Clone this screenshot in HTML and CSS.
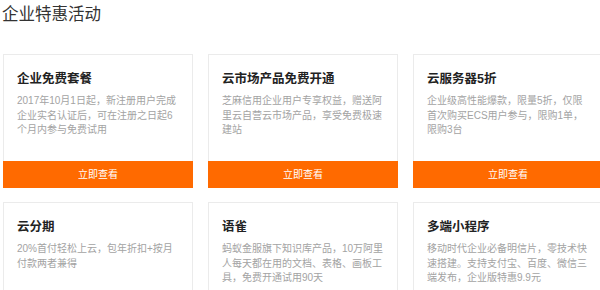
FILE: index.html
```html
<!DOCTYPE html>
<html lang="zh-CN">

<head>
  <meta charset="UTF-8">
  <meta name="viewport" content="width=device-width, initial-scale=1.0">
  <title>企业特惠活动</title>
  <link rel="stylesheet" href="styles.css">
</head>

<body>
  <div class="promo">
    <h2 class="promo-title">企业特惠活动</h2>
    <ul class="promo-list">
      <li class="promo-card">
        <div class="promo-body">
          <h3 class="promo-name">企业免费套餐</h3>
          <p class="promo-desc">2017年10月1日起，新注册用户完成企业实名认证后，可在注册之日起6个月内参与免费试用</p>
        </div>
        <a class="promo-btn">立即查看</a>
      </li>
      <li class="promo-card">
        <div class="promo-body">
          <h3 class="promo-name">云市场产品免费开通</h3>
          <p class="promo-desc">芝麻信用企业用户专享权益，赠送阿里云自营云市场产品，享受免费极速建站</p>
        </div>
        <a class="promo-btn">立即查看</a>
      </li>
      <li class="promo-card">
        <div class="promo-body">
          <h3 class="promo-name">云服务器5折</h3>
          <p class="promo-desc">企业级高性能爆款，限量5折，仅限首次购买ECS用户参与，限购1单，限购3台</p>
        </div>
        <a class="promo-btn">立即查看</a>
      </li>
      <li class="promo-card">
        <div class="promo-body">
          <h3 class="promo-name">云分期</h3>
          <p class="promo-desc">20%首付轻松上云，包年折扣+按月付款两者兼得</p>
        </div>
        <a class="promo-btn">立即查看</a>
      </li>
      <li class="promo-card">
        <div class="promo-body">
          <h3 class="promo-name">语雀</h3>
          <p class="promo-desc">蚂蚁金服旗下知识库产品，10万阿里人每天都在用的文档、表格、画板工具，免费开通试用90天</p>
        </div>
        <a class="promo-btn">立即查看</a>
      </li>
      <li class="promo-card">
        <div class="promo-body">
          <h3 class="promo-name">多端小程序</h3>
          <p class="promo-desc">移动时代企业必备明信片，零技术快速搭建。支持支付宝、百度、微信三端发布，企业版特惠9.9元</p>
        </div>
        <a class="promo-btn">立即查看</a>
      </li>
    </ul>
  </div>
</body>

</html>
```

FILE: styles.css
```css
* {
  margin: 0;
  padding: 0;
}

html,
body {
  overflow: hidden;
  background-color: #fff;
}

body {
  font-family: "Liberation Sans", "Noto Sans CJK SC", sans-serif;
  color: #333;
}

.promo {
  padding: 0 0 0 3px;
}

.promo-title {
  font-size: 16.5px;
  font-weight: normal;
  line-height: 28px;
  color: #333;
  margin-left: -1px;
  margin-bottom: 26px;
}

.promo-list {
  list-style: none;
  display: grid;
  grid-template-columns: repeat(3, 190px);
  column-gap: 15px;
  row-gap: 14px;
}

.promo-card {
  border: 1px solid #ebebeb;
  background-color: #fff;
}

.promo-body {
  height: 106px;
  box-sizing: border-box;
  padding: 16px 11px 0 13px;
}

.promo-name {
  font-size: 12.5px;
  line-height: 16px;
  font-weight: bold;
  color: #222;
}

.promo-desc {
  margin-top: 7px;
  font-size: 10px;
  line-height: 14.5px;
  color: #a3a3a3;
}

.promo-btn {
  display: block;
  height: 27px;
  line-height: 27px;
  margin: 0 -1px -1px;
  text-align: center;
  font-size: 10px;
  color: #fff;
  background-color: #ff6a00;
  cursor: pointer;
}
```
